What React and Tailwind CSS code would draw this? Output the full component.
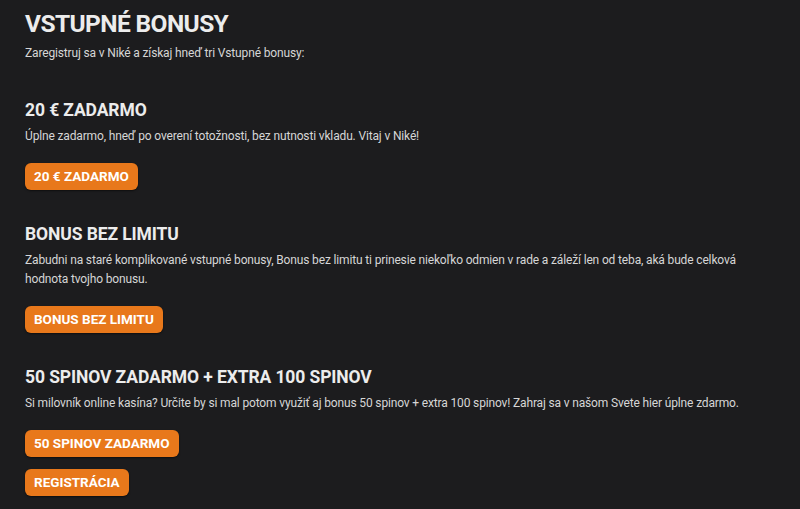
import React from 'react';

const sections = [
  {
    title: '20 € ZADARMO',
    text: 'Úplne zadarmo, hneď po overení totožnosti, bez nutnosti vkladu. Vitaj v Niké!',
    buttons: ['20 € ZADARMO'],
  },
  {
    title: 'BONUS BEZ LIMITU',
    text: 'Zabudni na staré komplikované vstupné bonusy, Bonus bez limitu ti prinesie niekoľko odmien v rade a záleží len od teba, aká bude celková hodnota tvojho bonusu.',
    buttons: ['BONUS BEZ LIMITU'],
  },
  {
    title: '50 SPINOV ZADARMO + EXTRA 100 SPINOV',
    text: 'Si milovník online kasína? Určite by si mal potom využiť aj bonus 50 spinov + extra 100 spinov! Zahraj sa v našom Svete hier úplne zdarmo.',
    buttons: ['50 SPINOV ZADARMO', 'REGISTRÁCIA'],
  },
];

const OrangeButton = ({ label }) => (
  <a
    href="#"
    className="inline-flex items-center h-[27px] px-[9px] rounded-md bg-[#e8781b] text-white text-[13.5px] font-bold shadow-[0_1px_2px_rgba(0,0,0,0.5)]"
  >
    {label}
  </a>
);

const App = () => {
  return (
    <div className="min-h-[509px] bg-[#1c1c1e] text-[#e6e6e6] px-[25px] pt-[9px] pb-4 font-['Roboto',sans-serif]">
      <h1 className="text-[24.5px] leading-[30px] font-bold tracking-[-0.6px] text-[#ececec]">VSTUPNÉ BONUSY</h1>
      <p className="mt-[4px] text-[12px] leading-[20px] tracking-[-0.15px] text-[#d6d6d6]">
        Zaregistruj sa v Niké a získaj hneď tri Vstupné bonusy:
      </p>

      {sections.map((s, i) => (
        <div key={s.title} className={i === 0 ? 'mt-[36px]' : 'mt-[33px]'}>
          <h2 className="text-[17.5px] leading-[22px] font-bold tracking-[-0.1px] text-[#ececec]">{s.title}</h2>
          <p className="mt-[6px] text-[12px] leading-[19px] tracking-[-0.15px] text-[#d6d6d6] max-w-[745px]">{s.text}</p>
          <div className="mt-[17px] flex flex-col items-start gap-[12px]">
            {s.buttons.map((b) => (
              <OrangeButton key={b} label={b} />
            ))}
          </div>
        </div>
      ))}
    </div>
  );
};

export default App;
